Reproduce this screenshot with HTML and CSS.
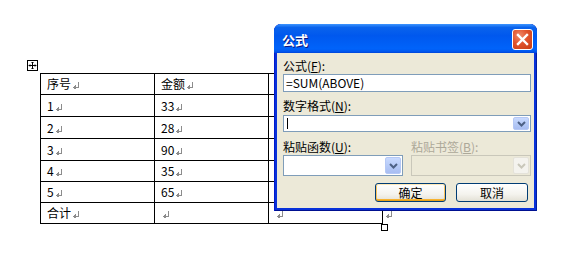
FILE: index.html
```html
<!DOCTYPE html>
<html>
<head>
<meta charset="utf-8">
<link rel="stylesheet" href="styles.css">
</head>
<body>
<div class="page">
  <svg class="move-handle" width="11" height="11" viewBox="0 0 11 11">
    <rect x="0.5" y="0.5" width="10" height="10" fill="#fff" stroke="#000"/>
    <path d="M5.5 2 V9 M2 5.5 H9" stroke="#000" stroke-width="1"/>
    <path d="M4.5 3 L5.5 2 L6.5 3 M4.5 8 L5.5 9 L6.5 8 M3 4.5 L2 5.5 L3 6.5 M8 4.5 L9 5.5 L8 6.5" stroke="#000" fill="none" stroke-width="1"/>
  </svg>
  <div class="table-wrap">
    <table class="doc-table">
      <colgroup><col class="cw"><col class="cw"><col class="cw"><col class="ce"></colgroup>
      <tr class="r21"><td>序号<i class="pm"></i></td><td>金额<i class="pm"></i></td><td><i class="pm"></i></td><td class="eor"><i class="pm"></i></td></tr>
      <tr class="r22"><td>1<i class="pm"></i></td><td>33<i class="pm"></i></td><td><i class="pm"></i></td><td class="eor"><i class="pm"></i></td></tr>
      <tr class="r22"><td>2<i class="pm"></i></td><td>28<i class="pm"></i></td><td><i class="pm"></i></td><td class="eor"><i class="pm"></i></td></tr>
      <tr class="r22"><td>3<i class="pm"></i></td><td>90<i class="pm"></i></td><td><i class="pm"></i></td><td class="eor"><i class="pm"></i></td></tr>
      <tr class="r21"><td>4<i class="pm"></i></td><td>35<i class="pm"></i></td><td><i class="pm"></i></td><td class="eor"><i class="pm"></i></td></tr>
      <tr class="r21"><td>5<i class="pm"></i></td><td>65<i class="pm"></i></td><td><i class="pm"></i></td><td class="eor"><i class="pm"></i></td></tr>
      <tr class="r21"><td>合计<i class="pm"></i></td><td><i class="pm"></i></td><td><i class="pm"></i></td><td class="eor"><i class="pm"></i></td></tr>
    </table>
    <div class="resize-handle"></div>
  </div>
</div>

<div class="dialog">
  <div class="titlebar">
    <span class="title">公式</span>
    <div class="close">
      <svg width="13" height="13" viewBox="0 0 13 13"><path d="M2 2 L11 11 M11 2 L2 11" stroke="#fff" stroke-width="2.4" stroke-linecap="square"/></svg>
    </div>
  </div>
  <div class="client">
    <div class="label l1">公式(<u>F</u>):</div>
    <div class="textbox">=SUM(ABOVE)</div>
    <div class="label l2">数字格式(<u>N</u>):</div>
    <div class="combo c1"><span class="caret"></span>
      <span class="dropbtn"><svg width="9" height="6" viewBox="0 0 9 6"><path d="M1 1 L4.5 4.5 L8 1" stroke="#4d6185" stroke-width="2" fill="none"/></svg></span>
    </div>
    <div class="row2">
      <div class="col">
        <div class="label">粘贴函数(<u>U</u>):</div>
        <div class="combo c2">
          <span class="dropbtn"><svg width="9" height="6" viewBox="0 0 9 6"><path d="M1 1 L4.5 4.5 L8 1" stroke="#4d6185" stroke-width="2" fill="none"/></svg></span>
        </div>
      </div>
      <div class="col">
        <div class="label disabled">粘贴书签(<u>B</u>):</div>
        <div class="combo c2 off">
          <span class="dropbtn"><svg width="9" height="6" viewBox="0 0 9 6"><path d="M1 1 L4.5 4.5 L8 1" stroke="#c9c7ba" stroke-width="2" fill="none"/></svg></span>
        </div>
      </div>
    </div>
    <div class="buttons">
      <div class="btn default">确定</div>
      <div class="btn">取消</div>
    </div>
  </div>
</div>
</body>
</html>
```

FILE: styles.css
```css
html, body {
  margin: 0;
  padding: 0;
  background: #fff;
}
body {
  width: 577px;
  height: 261px;
  overflow: hidden;
  position: relative;
  font-family: "Noto Sans CJK SC", "Liberation Sans", sans-serif;
  font-size: 12px;
  color: #000;
}
.page {
  padding: 60px 0 0 27px;
}
.move-handle {
  display: block;
}
.table-wrap {
  position: relative;
  margin: 2px 0 0 13px;
  width: 360px;
}
.doc-table {
  border-collapse: collapse;
  table-layout: fixed;
  width: 357px;
}
.doc-table col.cw { width: 114px; }
.doc-table col.ce { width: 15px; }
.doc-table td {
  border: 1px solid #000;
  padding: 0 0 0 6px;
  line-height: 14px;
  vertical-align: middle;
  white-space: nowrap;
  overflow: visible;
}
.doc-table tr.r21 td { height: 20px; }
.doc-table tr.r22 td { height: 21px; }
.doc-table td.eor {
  border: none;
  padding-left: 1px;
}
.pm {
  display: inline-block;
  width: 8px;
  height: 7px;
  margin-left: 1px;
  vertical-align: 0px;
  background:
    linear-gradient(#8c8c8c, #8c8c8c) 6px 0 / 1px 6px no-repeat,
    linear-gradient(#8c8c8c, #8c8c8c) 1px 5px / 6px 1px no-repeat,
    linear-gradient(#8c8c8c, #8c8c8c) 2px 4px / 1px 3px no-repeat,
    linear-gradient(#8c8c8c, #8c8c8c) 3px 3px / 1px 5px no-repeat;
}
.resize-handle {
  position: absolute;
  left: 341px;
  top: 151px;
  width: 5px;
  height: 5px;
  border: 1px solid #000;
  background: #fff;
}

/* Dialog */
.dialog {
  position: absolute;
  left: 274px;
  top: 24px;
  width: 263px;
  height: 187px;
  box-sizing: border-box;
  background: #0831d9;
  border-radius: 7px 7px 0 0;
  display: flex;
  flex-direction: column;
  padding: 0 3px 3px 3px;
  box-shadow: inset 1px 0 #0019cf, inset -1px 0 #001ea0, inset 0 -1px #001090;
}
.titlebar {
  height: 29px;
  margin: 0 -3px;
  padding: 0 4px 0 8px;
  border-radius: 7px 7px 0 0;
  background: linear-gradient(#3d95ff 0%, #0a63ec 12%, #0058ee 40%, #0063fa 85%, #0059f0 94%, #0044d8 100%);
  display: flex;
  align-items: center;
  justify-content: space-between;
}
.title {
  color: #fff;
  font-weight: bold;
  font-size: 13px;
  text-shadow: 1px 1px #0a1883;
  margin-top: 1px;
}
.close {
  width: 19px;
  height: 19px;
  border: 1px solid #fff;
  border-radius: 3px;
  background: radial-gradient(circle at 35% 30%, #f08a6b 0%, #e0522c 45%, #c73c12 100%);
  display: flex;
  align-items: center;
  justify-content: center;
  margin-top: 1px;
}
.client {
  flex: 1;
  background: #ece9d8;
  padding: 6px 3px 0 6px;
  display: flex;
  flex-direction: column;
}
.label {
  line-height: 14px;
  height: 14px;
  white-space: nowrap;
}
.label u { text-decoration: underline; }
.label.disabled { color: #aca899; }
.textbox {
  margin-top: 1px;
  height: 18px;
  box-sizing: border-box;
  border: 1px solid #7f9db9;
  background: #fff;
  padding-left: 2px;
  line-height: 16px;
}
.l2 { margin-top: 7px; }
.combo {
  position: relative;
  box-sizing: border-box;
  border: 1px solid #7f9db9;
  background: #fff;
  display: flex;
  justify-content: flex-end;
  align-items: stretch;
  padding: 1px;
}
.combo.c1 {
  margin-top: 2px;
  height: 17px;
  justify-content: space-between;
  align-items: stretch;
}
.caret {
  width: 1px;
  margin: 1px 0 1px 2px;
  background: #000;
}
.combo.c2 {
  margin-top: 1px;
  height: 21px;
  width: 120px;
}
.combo.off {
  border-color: #c9c7ba;
  background: #ece9d8;
}
.dropbtn {
  width: 16px;
  box-sizing: border-box;
  border-radius: 2px;
  background: linear-gradient(#c9daff, #b3c8f6 60%, #a8bdf2);
  border: 1px solid #b5c8f5;
  display: flex;
  align-items: center;
  justify-content: center;
}
.combo.off .dropbtn {
  background: #f4f3ee;
  border-color: #e4e2d9;
}
.row2 {
  display: flex;
  gap: 8px;
  margin-top: 8px;
}
.col {
  display: flex;
  flex-direction: column;
}
.buttons {
  display: flex;
  justify-content: flex-end;
  gap: 10px;
  margin-top: 7px;
  padding-right: 3px;
}
.btn {
  width: 72px;
  height: 19px;
  box-sizing: border-box;
  border: 1px solid #003c74;
  border-radius: 3px;
  background: linear-gradient(#ffffff, #f4f3ee 60%, #e3e1d6);
  text-align: center;
  line-height: 17px;
}
.btn.default {
  width: 71px;
  box-shadow: inset 0 1px #ffe9b8, inset 0 -1px #e5a01a, inset 1px 0 #f9c35e, inset -1px 0 #f9c35e, inset 0 -2px #f8b330;
}
```
